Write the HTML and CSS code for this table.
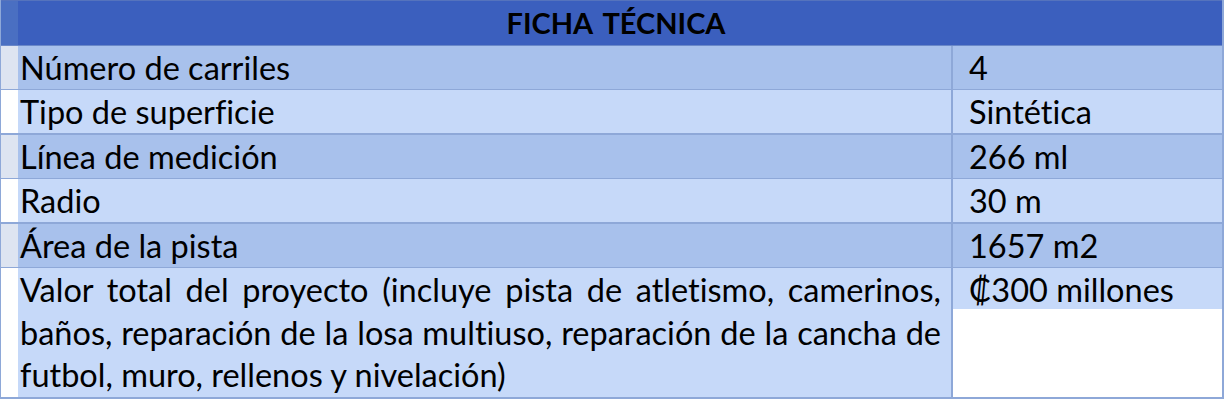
FILE: index.html
```html
<!DOCTYPE html>
<html lang="es">
<head>
<meta charset="utf-8">
<title>Ficha técnica</title>
<link rel="stylesheet" href="styles.css">
</head>
<body>
<div class="sheet">
  <div class="row head">
    <div class="pad"></div>
    <div class="title">FICHA TÉCNICA</div>
  </div>
  <div class="row odd">
    <div class="pad"></div>
    <div class="label">Número de carriles</div>
    <div class="value">4</div>
  </div>
  <div class="row even">
    <div class="pad"></div>
    <div class="label">Tipo de superficie</div>
    <div class="value">Sintética</div>
  </div>
  <div class="row odd">
    <div class="pad"></div>
    <div class="label">Línea de medición</div>
    <div class="value">266 ml</div>
  </div>
  <div class="row even">
    <div class="pad"></div>
    <div class="label">Radio</div>
    <div class="value">30 m</div>
  </div>
  <div class="row odd">
    <div class="pad"></div>
    <div class="label">Área de la pista</div>
    <div class="value">1657 m2</div>
  </div>
  <div class="row even last">
    <div class="pad"></div>
    <div class="label multi">
      <span class="line">Valor total del proyecto (incluye pista de atletismo, camerinos,</span>
      <span class="line">baños, reparación de la losa multiuso, reparación de la cancha de</span>
      <span class="line final">futbol, muro, rellenos y nivelación)</span>
    </div>
    <div class="value blank"><span class="shade">₡300 millones</span></div>
  </div>
</div>
</body>
</html>
```

FILE: styles.css
```css
* { box-sizing: border-box; }

body {
  margin: 0;
  background: #ffffff;
  font-family: Lato, "Open Sans", sans-serif;
  font-variant-ligatures: none;
  font-feature-settings: "liga" 0, "clig" 0;
  color: #000;
}

.sheet {
  width: 1224px;
  border-left: 1px solid #8ea8d8;
  border-right: 2px solid #8ea8d8;
}

.row {
  display: grid;
  grid-template-columns: 17px 933px 271px;
  height: 44.4px;
  border-bottom: 2px solid #8ea8d8;
  font-size: 32.5px;
  line-height: 42px;
}

.head {
  height: 46px;
  border-top: 1px solid #5573bd;
  border-bottom: 1px solid #6a88c8;
  background: #3b5fbe;
}

.head .pad { background: #4a6fc2; }

.title {
  grid-column: 2 / 4;
  text-align: center;
  font-weight: 700;
  font-size: 29px;
  line-height: 44px;
  word-spacing: 4px;
  padding-right: 8px;
}

.label { padding-left: 2px; padding-top: 1px; }

.value {
  border-left: 2px solid #8ea8d8;
  padding-left: 16px;
  padding-top: 1px;
}

.odd .pad { background: #dde4f1; }
.odd .label, .odd .value { background: #a8c1ec; }

.even .pad { background: #ffffff; }
.even .label, .even .value { background: #c6d9f9; }

.last {
  height: 131px;
}

.multi {
  padding-right: 10px;
}

.line {
  display: block;
  text-align: justify;
  text-align-last: justify;
  height: 42.7px;
}

.line.final { text-align-last: left; }

.even .value.blank {
  background: #ffffff;
  padding-left: 0;
  padding-top: 0;
}

.shade {
  display: block;
  height: 41px;
  padding-left: 16px;
  padding-top: 1px;
  background: #c6d9f9;
}
```
